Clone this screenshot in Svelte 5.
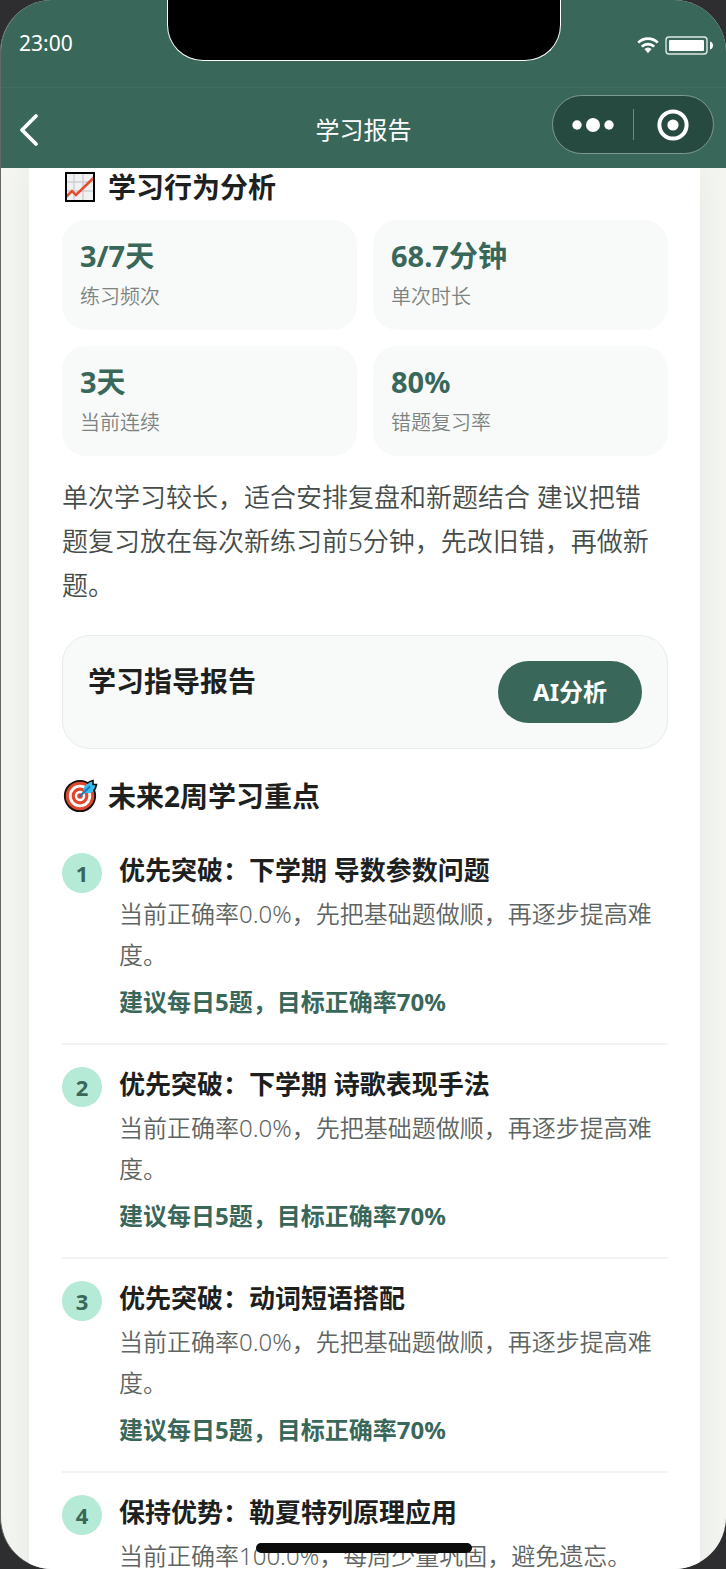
<script>
  const stats = [
    { value: "3/7天", label: "练习频次" },
    { value: "68.7分钟", label: "单次时长" },
    { value: "3天", label: "当前连续" },
    { value: "80%", label: "错题复习率" },
  ];

  const focus = [
    {
      title: "优先突破：下学期 导数参数问题",
      desc: "当前正确率0.0%，先把基础题做顺，再逐步提高难度。",
      advice: "建议每日5题，目标正确率70%",
    },
    {
      title: "优先突破：下学期 诗歌表现手法",
      desc: "当前正确率0.0%，先把基础题做顺，再逐步提高难度。",
      advice: "建议每日5题，目标正确率70%",
    },
    {
      title: "优先突破：动词短语搭配",
      desc: "当前正确率0.0%，先把基础题做顺，再逐步提高难度。",
      advice: "建议每日5题，目标正确率70%",
    },
    {
      title: "保持优势：勒夏特列原理应用",
      desc: "当前正确率100.0%，每周少量巩固，避免遗忘。",
    },
  ];
</script>

<div class="screen">
  <div class="status">
    <span class="time">23:00</span>
    <div class="notch"></div>
    <div class="signals">
      <svg width="22" height="18" viewBox="0 0 22 18">
        <g fill="none" stroke="#fff" stroke-width="2.6">
          <path d="M1.2 6.6a14 14 0 0 1 19.6 0" />
          <path d="M4.8 10.6a9 9 0 0 1 12.4 0" />
        </g>
        <path d="M7.4 13a5.4 5.4 0 0 1 7.2 0L11 17.2z" fill="#fff" />
      </svg>
      <svg width="49" height="19" viewBox="0 0 49 19">
        <rect x="1" y="1" width="41" height="17" rx="3" fill="none" stroke="#dfe8e5" stroke-width="1.4" />
        <rect x="4" y="4" width="35" height="11" rx="1" fill="#fff" />
        <path d="M45 5.5c4 .6 4 7.4 0 8z" fill="#fff" />
      </svg>
    </div>
  </div>

  <header class="nav">
    <button class="back" aria-label="返回">
      <svg width="20" height="34" viewBox="0 0 20 34">
        <path d="M17 3 3 17l14 14" fill="none" stroke="#fff" stroke-width="3.8" stroke-linecap="round" stroke-linejoin="round" />
      </svg>
    </button>
    <h1>学习报告</h1>
    <div class="capsule">
      <button aria-label="更多">
        <svg width="42" height="16" viewBox="0 0 42 16" fill="#fff">
          <circle cx="5" cy="8" r="4.7" />
          <circle cx="21" cy="8" r="7" />
          <circle cx="37" cy="8" r="4.7" />
        </svg>
      </button>
      <span class="split"></span>
      <button aria-label="关闭">
        <svg width="32" height="32" viewBox="0 0 32 32">
          <circle cx="16" cy="16" r="13.6" fill="none" stroke="#fff" stroke-width="4" />
          <circle cx="16" cy="16" r="5.6" fill="#fff" />
        </svg>
      </button>
    </div>
  </header>

  <main>
    <div class="card">
      <h2>
        <svg width="36" height="36" viewBox="0 0 36 36">
          <rect x="4" y="4" width="28" height="28" fill="#f1f1f3" />
          <path d="M12 4v28M21 4v28M4 13h28M4 22h28" stroke="#cfcfd3" stroke-width="1.5" />
          <path d="M4 28l6-6 4 4L32 8.5" fill="none" stroke="#e2502f" stroke-width="2.6" />
          <rect x="4" y="4" width="28" height="28" fill="none" stroke="#000" stroke-width="2" />
        </svg>
        学习行为分析
      </h2>

      <div class="stats">
        {#each stats as stat}
          <div class="stat">
            <div class="stat-value">{stat.value}</div>
            <div class="stat-label">{stat.label}</div>
          </div>
        {/each}
      </div>

      <p class="summary">
        单次学习较长，适合安排复盘和新题结合 建议把错题复习放在每次新练习前5分钟，先改旧错，再做新题。
      </p>

      <section class="guide">
        <h3>学习指导报告</h3>
        <button class="analyse">AI分析</button>
      </section>

      <h2>
        <svg width="36" height="36" viewBox="0 0 36 36">
          <circle cx="18" cy="18" r="15.2" fill="#e2462c" stroke="#111" stroke-width="1.8" />
          <circle cx="18" cy="18" r="11.2" fill="#fff" />
          <circle cx="18" cy="18" r="8.4" fill="#e2462c" />
          <circle cx="18" cy="18" r="5.2" fill="#fff" />
          <circle cx="18" cy="18" r="2.8" fill="#e2462c" />
          <path d="M21.5 14.5c-1-5 3-10 9-11.5v4h4c-1 6.500-6 10-13 7.500z" fill="#35bdf0" />
          <path d="M25 5.5c1.500-1.500 3.500-2.500 6-3v4h3.500c-.5 3-1.500 5-3 6.500" fill="none" stroke="#111" stroke-width="1.6" />
          <path d="M17.5 18.500 28 8.500" stroke="#1878c4" stroke-width="2" />
        </svg>
        未来2周学习重点
      </h2>

      <ol>
        {#each focus as item, i}
          <li>
            <span class="badge">{i + 1}</span>
            <div class="item-body">
              <h3 class="item-title">{item.title}</h3>
              <p class="desc">{item.desc}</p>
              {#if item.advice}
                <p class="advice">{item.advice}</p>
              {/if}
            </div>
          </li>
        {/each}
      </ol>
    </div>
  </main>

  <div class="home"></div>
</div>

<style>
  :global(body) {
    background: #2e2e31;
  }

  .screen {
    position: relative;
    box-sizing: border-box;
    height: 100vh;
    display: flex;
    flex-direction: column;
    overflow: hidden;
    border-left: 1px solid #666;
    border-radius: 52px;
    background: #f5f6f2;
    color: #1e1f1f;
    font-family: "Noto Sans", "Noto Sans CJK SC", sans-serif;
  }

  h1,
  h2,
  h3,
  p,
  ol {
    margin: 0;
    padding: 0;
  }

  button {
    padding: 0;
    border: 0;
    background: none;
    color: inherit;
    font: inherit;
    cursor: pointer;
  }

  svg {
    display: block;
    flex: none;
  }

  .status {
    flex: none;
    display: grid;
    grid-template-columns: 1fr auto 1fr;
    height: 87px;
    border-bottom: 1px solid #416e61;
    background: #39675a;
    color: #fff;
  }

  .time {
    padding: 28px 0 0 18px;
    font-size: 21px;
    line-height: 30px;
  }

  .notch {
    box-sizing: border-box;
    width: 394px;
    height: 61px;
    border: 1px solid #fff;
    border-top: 0;
    border-radius: 0 0 36px 36px;
    background: #000;
  }

  .signals {
    display: flex;
    justify-content: flex-end;
    gap: 6px;
    padding: 36px 12px 0 0;
  }

  .nav {
    flex: none;
    display: grid;
    grid-template-columns: 1fr auto 1fr;
    align-items: center;
    padding: 7px 12px 4px;
    box-sizing: border-box;
    height: 80px;
    background: #39675a;
    color: #fff;
  }

  .back {
    justify-self: start;
    padding-left: 6px;
  }

  h1 {
    font-size: 24px;
    font-weight: 400;
    line-height: 36px;
  }

  .capsule {
    align-self: start;
    justify-self: end;
    display: flex;
    align-items: center;
    box-sizing: border-box;
    width: 162px;
    height: 59px;
    border: 1px solid #7f9a92;
    border-radius: 30px;
    background: #264a40;
  }

  .capsule button {
    flex: 1;
    display: flex;
    justify-content: center;
  }

  .split {
    width: 1px;
    height: 31px;
    background: #6d8a82;
  }

  main {
    flex: 1;
    min-height: 0;
    padding: 0 26px 0 28px;
    overflow: hidden;
  }

  .card {
    padding: 0 32px 0 33px;
    background: #fff;
    box-shadow: 0 0 32px rgba(57, 103, 90, 0.1);
  }

  h2 {
    display: flex;
    align-items: center;
    gap: 10px;
    font-size: 28px;
    font-weight: 700;
    line-height: 38px;
  }

  .stats {
    display: grid;
    grid-template-columns: 1fr 1fr;
    gap: 16px;
    margin-top: 14px;
  }

  .stat {
    padding: 17px 18px 19px;
    border-radius: 24px;
    background: #f8faf9;
  }

  .stat-value {
    color: #39675a;
    font-size: 29px;
    font-weight: 700;
    line-height: 38px;
  }

  .stat-label {
    margin-top: 8px;
    color: #7c8380;
    font-size: 20px;
    font-weight: 350;
    line-height: 28px;
  }

  .summary {
    margin-top: 19px;
    padding-right: 4px;
    color: #454c49;
    font-size: 26px;
    font-weight: 350;
    line-height: 44px;
  }

  .guide {
    display: flex;
    justify-content: space-between;
    align-items: flex-start;
    margin: 28px 0;
    padding: 25px;
    border: 1px solid #e6eceb;
    border-radius: 28px;
    background: #f8faf9;
  }

  .guide h3 {
    font-size: 28px;
    line-height: 40px;
  }

  .analyse {
    height: 62px;
    padding: 0 35px 4px;
    border-radius: 31px;
    background: #39675a;
    color: #fff;
    font-size: 24px;
    font-weight: 700;
  }

  ol {
    margin-top: 16px;
    list-style: none;
  }

  li {
    display: flex;
    gap: 17px;
    padding: 22px 0 24px;
    border-bottom: 2px solid #f2f4f3;
  }

  .badge {
    flex: none;
    width: 40px;
    height: 40px;
    border-radius: 50%;
    background: #b5ead7;
    color: #39675a;
    font-size: 22px;
    font-weight: 700;
    line-height: 40px;
    text-align: center;
  }

  .item-title {
    font-size: 26px;
    line-height: 34px;
  }

  .desc {
    margin-top: 6px;
    color: #5d6461;
    font-size: 24px;
    font-weight: 350;
    line-height: 41px;
  }

  .advice {
    margin-top: 10px;
    color: #39675a;
    font-size: 24px;
    font-weight: 700;
    line-height: 34px;
  }

  .home {
    position: absolute;
    bottom: 16px;
    left: 50%;
    width: 216px;
    height: 10px;
    margin-left: -108px;
    border-radius: 5px;
    background: #0b0b0b;
  }
</style>
